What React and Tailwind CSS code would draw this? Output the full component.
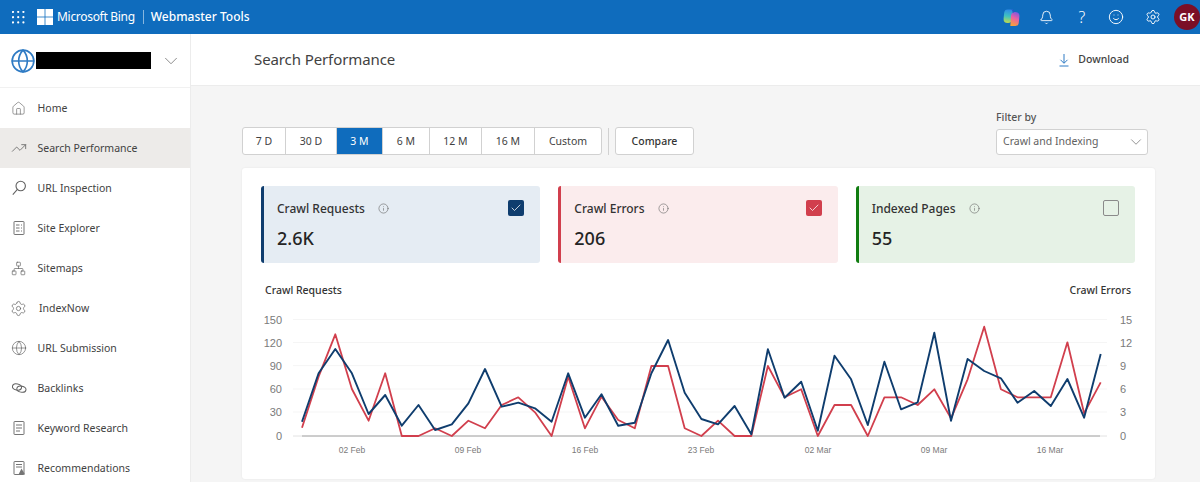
import { Bell, ChevronDown, Globe, House, Info, Check, Network, Settings, Smile, TrendingUp } from "lucide-react";

const FONT = "font-['Noto_Sans','Open_Sans',sans-serif]";

// y positions read off the chart, one per day
const BLUE = [421.7, 373.3, 349, 373.3, 414, 395, 425.7, 405, 430, 424.3, 403.3, 369, 406.7, 402.7, 408.3, 421.7, 373.3, 417.7, 394.3, 425.7, 422.7, 373.3, 340, 392.7, 419, 424.3, 406, 434.3, 349.3, 397.7, 381.7, 430.7, 355.7, 379.3, 425, 361.7, 409.3, 402.3, 332.7, 420.7, 359, 371, 378.3, 402.7, 391, 406, 379, 417.7, 354];
const RED = [427.7, 376.7, 334.3, 389, 420.7, 373.3, 436, 436, 428.3, 436, 420.7, 428.3, 405, 397.3, 412.3, 436, 376.7, 428.3, 396.7, 420, 428.3, 366, 366, 428.3, 436, 420.7, 436, 436, 366, 397.3, 389.3, 436, 405, 405, 436, 397.3, 397.3, 405, 389.3, 418.3, 379.3, 326.7, 389.3, 397.3, 397.3, 397.3, 342.3, 413.3, 382.3];

const toPoints = (ys) => ys.map((y, i) => `${(302 + i * 16.64).toFixed(1)},${y}`).join(" ");

const TABS = ["7 D", "30 D", "3 M", "6 M", "12 M", "16 M", "Custom"];
const TAB_WIDTHS = ["w-[43px]", "w-[51px]", "w-[46px]", "w-[47px]", "w-[52px]", "w-[53px]", "w-[66px]"];

function Doc({ children }) {
  return (
    <svg width="16" height="16" viewBox="0 0 16 16" fill="none" stroke="#757575" strokeWidth="1">
      <rect x="3" y="1.5" width="10" height="13" rx="0.5" />
      {children}
    </svg>
  );
}

function Links() {
  return (
    <svg width="16" height="16" viewBox="0 0 16 16" fill="none" stroke="#616161" strokeWidth="1">
      <ellipse cx="6" cy="7" rx="4.6" ry="3" transform="rotate(12 6 7)" />
      <ellipse cx="10.4" cy="9.2" rx="4.6" ry="3" transform="rotate(12 10.4 9.2)" />
    </svg>
  );
}

function Magnifier() {
  return (
    <svg width="16" height="16" viewBox="0 0 16 16" fill="none" stroke="#616161" strokeWidth="1.1">
      <circle cx="9.7" cy="6" r="4.7" />
      <path d="M6.4 9.4 1.8 14.6" />
    </svg>
  );
}

const NAV = [
  { label: "Home", icon: <House size={15} strokeWidth={1} color="#616161" /> },
  { label: "Search Performance", icon: <TrendingUp size={16} strokeWidth={1.2} color="#616161" />, active: true },
  { label: "URL Inspection", icon: <Magnifier /> },
  {
    label: "Site Explorer",
    icon: <Doc><path d="M5 5h3.5M10 5h1M5 8h3.5M10 8h1M5 11h3.5M10 11h1" /></Doc>,
  },
  { label: "Sitemaps", icon: <Network size={15} strokeWidth={1.1} color="#616161" /> },
  { label: "IndexNow", icon: <Settings size={17} strokeWidth={1} color="#616161" />, indent: true },
  { label: "URL Submission", icon: <Globe size={16} strokeWidth={1} color="#616161" /> },
  { label: "Backlinks", icon: <Links /> },
  { label: "Keyword Research", icon: <Doc><path d="M5 5h6M5 8h6M5 11h4" /></Doc> },
  {
    label: "Recommendations",
    icon: <Doc><path d="M5 4.5h6M5 7h6" /><path d="M10.5 8.5l3.5 6H7.5z" fill="#757575" stroke="none" /></Doc>,
  },
];

function CopilotIcon() {
  return (
    <svg width="17" height="19" viewBox="0 0 17 19">
      <defs>
        <linearGradient id="copA" x1="0.5" y1="0" x2="0.4" y2="1">
          <stop offset="0" stopColor="#2f8be8" />
          <stop offset="0.5" stopColor="#3fc2c0" />
          <stop offset="1" stopColor="#c4dc4a" />
        </linearGradient>
        <linearGradient id="copB" x1="0.7" y1="0" x2="0.4" y2="1">
          <stop offset="0" stopColor="#7a58e0" />
          <stop offset="0.45" stopColor="#e85fa6" />
          <stop offset="1" stopColor="#f5a03c" />
        </linearGradient>
      </defs>
      <path d="M4.5 1.5h5.2L9 11c-.2 2.6-1.6 4-4 4C1.8 15 .3 13.500.6 10.500L1.200 4.800C1.400 2.700 2.600 1.500 4.500 1.500z" fill="url(#copA)" />
      <path d="M12.500 18H7.300L8 8c.2-2.600 1.600-4 4-4 3.200 0 4.700 1.500 4.400 4.500l-.6 6C15.600 16.800 14.400 18 12.500 18z" fill="url(#copB)" />
      <path d="M9.700 1.500H7.500c1.600.4 2.500 1.500 2.700 3.400L10.800 4c.1-1.300-.2-2.200-1.100-2.500z" fill="#2a57c8" />
    </svg>
  );
}

function Header() {
  return (
    <header className="flex h-[34px] items-center bg-[#0f6cbd] text-white">
      <svg className="ml-[12px]" width="13" height="13" viewBox="0 0 13 13" fill="white">
        {[1, 6.2, 11.4].map((y) =>
          [1, 6.2, 11.4].map((x) => <circle key={`${x}-${y}`} cx={x} cy={y} r="1.1" />)
        )}
      </svg>
      <svg className="ml-[12px]" width="16" height="16" viewBox="0 0 16 16" fill="white">
        <rect width="7.6" height="7.6" />
        <rect x="8.4" width="7.6" height="7.6" />
        <rect y="8.4" width="7.6" height="7.6" />
        <rect x="8.4" y="8.4" width="7.6" height="7.6" />
      </svg>
      <span className="ml-[4px] text-[12px] tracking-[-0.3px]">Microsoft Bing</span>
      <span className="ml-[8px] mr-[7px] h-[14px] w-px bg-white/50" />
      <span className="text-[12px] font-medium">Webmaster Tools</span>
      <div className="ml-auto flex items-center">
        <CopilotIcon />
        <Bell className="ml-[19px]" size={15} strokeWidth={1.4} />
        <span className="ml-[21px] w-[14px] text-center text-[16px] font-light leading-none">?</span>
        <Smile className="ml-[19px]" size={16} strokeWidth={1.4} />
        <Settings className="ml-[21px]" size={16} strokeWidth={1.4} />
        <span className="ml-[13px] grid h-[26px] w-[26px] place-items-center rounded-full bg-[#7b0f26] text-[11px] font-bold">
          GK
        </span>
      </div>
    </header>
  );
}

function Sidebar() {
  return (
    <aside className="h-full w-[191px] shrink-0 overflow-hidden border-r border-[#ececec] bg-white">
      <div className="flex h-[54px] items-center border-b border-[#f1f1f1] pl-[10px]">
        <Globe size={26} strokeWidth={1.5} color="#2f7bc4" />
        <span className="h-[17px] w-[115px] bg-black" />
        <ChevronDown className="ml-[9px]" size={22} strokeWidth={0.9} color="#757575" />
      </div>
      <nav>
        {NAV.map((item) => (
          <div
            key={item.label}
            className={`flex h-[40px] items-center pl-[10px] text-[10.5px] text-[#424242] ${item.active ? "bg-[#edebe9]" : ""}`}
          >
            <span className="grid w-[17px] place-items-center">{item.icon}</span>
            <span className={`pt-px ${item.indent ? "ml-[12px]" : "ml-[10.5px]"}`}>{item.label}</span>
          </div>
        ))}
      </nav>
    </aside>
  );
}

function Tile({ title, value, bg, bar, box, checked }) {
  return (
    <div className={`relative h-[77px] rounded-[3px] border-l-[3px] pl-[13px] pt-[14px] ${bg} ${bar}`}>
      <div className="flex items-center text-[12px] font-medium text-[#333]">
        {title}
        <Info className="ml-[13px]" size={11} strokeWidth={1.3} color="#666" />
      </div>
      <div className="mt-[8px] text-[18px] font-medium leading-[24px] text-[#242424]">{value}</div>
      <span className={`absolute right-[16px] top-[14px] grid h-[16px] w-[16px] place-items-center rounded-[2px] ${box}`}>
        {checked && <Check size={12} strokeWidth={1.5} color="white" />}
      </span>
    </div>
  );
}

function Chart() {
  const ticks = [
    [319.5, "150", "15"],
    [342.5, "120", "12"],
    [365.6, "90", "9"],
    [389, "60", "6"],
    [412, "30", "3"],
    [436, "0", "0"],
  ];
  const dates = [
    [352, "02 Feb"],
    [468, "09 Feb"],
    [585, "16 Feb"],
    [701, "23 Feb"],
    [818, "02 Mar"],
    [934, "09 Mar"],
    [1050, "16 Mar"],
  ];
  return (
    <svg className="block" width="913" height="166" viewBox="242 300 913 166" fontFamily="Liberation Sans, sans-serif">
      {ticks.slice(0, 5).map(([y]) => (
        <line key={y} x1="293" x2="1107" y1={y} y2={y} stroke="#f5f5f5" />
      ))}
      <line x1="293" x2="1107" y1="436" y2="436" stroke="#e2e2e2" />
      <line x1="302" x2="1100" y1="436" y2="436" stroke="#a8a8a8" />
      {ticks.map(([y, l, r]) => (
        <g key={y} fill="#7a7a7a" fontSize="11">
          <text x="282" y={y + 4} textAnchor="end">{l}</text>
          <text x="1120" y={y + 4}>{r}</text>
        </g>
      ))}
      {dates.map(([x, d]) => (
        <text key={d} x={x} y="452.5" fontSize="8.5" fill="#7a7a7a" textAnchor="middle">{d}</text>
      ))}
      <polyline points={toPoints(RED)} fill="none" stroke="#d13f4d" strokeWidth="1.8" strokeLinejoin="round" />
      <polyline points={toPoints(BLUE)} fill="none" stroke="#0f3d6e" strokeWidth="1.9" strokeLinejoin="round" />
    </svg>
  );
}

export default function App() {
  return (
    <div className={`flex h-[482px] w-[1200px] flex-col overflow-hidden bg-[#f5f5f5] ${FONT}`}>
      <Header />
      <div className="flex min-h-0 flex-1">
        <Sidebar />
        <main className="min-w-0 flex-1">
          <div className="flex h-[52px] items-center border-b border-[#ececec] bg-white pl-[63px] pr-[71px]">
            <h1 className="text-[15px] tracking-[-0.1px] text-[#424242]">Search Performance</h1>
            <div className="ml-auto flex items-center text-[10.5px] font-medium text-[#424242]">
              <svg width="12" height="14" viewBox="0 0 12 14" fill="none" stroke="#2f7bc4" strokeWidth="1">
                <path d="M6 1v9M2.500 6.800 6 10.300l3.500-3.500M1.500 13h9" />
              </svg>
              <span className="ml-[8px] pt-px">Download</span>
            </div>
          </div>
          <div className="pl-[51px] pr-[45px] pt-[24px]">
            <div className="flex items-end pr-[7px]">
              <div className="flex h-[28px] overflow-hidden rounded-[3px] border border-[#d1d1d1] bg-white text-[10.5px] text-[#424242]">
                {TABS.map((t, i) => (
                  <span
                    key={t}
                    className={`grid place-items-center border-r border-[#d1d1d1] pt-[2px] last:border-r-0 ${TAB_WIDTHS[i]} ${t === "3 M" ? "bg-[#0f6cbd] text-white" : ""}`}
                  >
                    {t}
                  </span>
                ))}
              </div>
              <span className="ml-[6px] h-[27px] w-px bg-[#d1d1d1]" />
              <span className="ml-[6px] grid h-[28px] w-[79px] place-items-center rounded-[3px] border border-[#d1d1d1] bg-white pt-[2px] text-[10.5px] font-medium text-[#333]">
                Compare
              </span>
              <div className="ml-auto w-[152px]">
                <div className="mb-[3px] text-[10.5px] font-medium text-[#555]">Filter by</div>
                <div className="flex h-[26px] items-center justify-between rounded-[3px] border border-[#d1d1d1] bg-white pl-[6px] pr-[2px] text-[10.5px] text-[#616161]">
                  Crawl and Indexing
                  <ChevronDown size={18} strokeWidth={0.9} color="#616161" />
                </div>
              </div>
            </div>
            <section className="mt-[13px] h-[311px] rounded-[3px] bg-white pt-[18px] shadow-[0_0_2px_rgba(0,0,0,0.08)]">
              <div className="ml-[19px] mr-[20px] grid grid-cols-3 gap-[18px]">
                <Tile title="Crawl Requests" value="2.6K" bg="bg-[#e5ecf3]" bar="border-[#0f3d6e]" box="bg-[#0f3d6e]" checked />
                <Tile title="Crawl Errors" value="206" bg="bg-[#fbeced]" bar="border-[#d13f4d]" box="bg-[#d13f4d]" checked />
                <Tile title="Indexed Pages" value="55" bg="bg-[#e6f2e6]" bar="border-[#107c10]" box="border border-[#8a8a8a]" />
              </div>
              <div className="ml-[23px] mr-[24px] mt-[20px] flex justify-between text-[10.5px] font-medium leading-[14px] text-[#333]">
                <span>Crawl Requests</span>
                <span>Crawl Errors</span>
              </div>
              <div className="mt-[3px]">
                <Chart />
              </div>
            </section>
          </div>
        </main>
      </div>
    </div>
  );
}
